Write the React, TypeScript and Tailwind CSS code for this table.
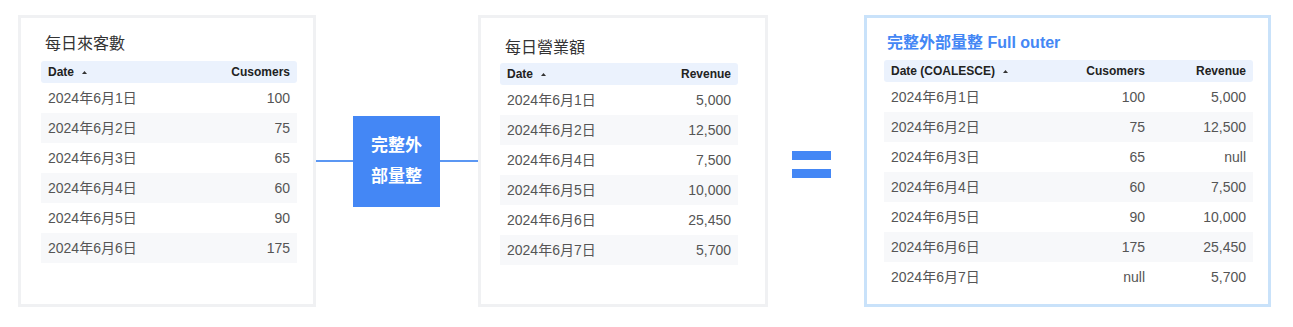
import React from 'react';

type Col = { label: string; width: number; align: 'left' | 'right'; sort?: boolean };

interface TableProps {
  cols: Col[];
  rows: string[][];
}

const Table: React.FC<TableProps> = ({ cols, rows }) => {
  return (
    <div className="flex w-fit flex-col">
      <div className="flex h-[22px] items-center rounded-[3px] bg-[#ebf2fd] text-[12px] font-bold text-[#222]">
        {cols.map((c) => (
          <div
            key={c.label}
            style={{ width: c.width }}
            className={`flex items-center px-[7px] ${c.align === 'right' ? 'justify-end' : 'justify-start'}`}
          >
            <span>{c.label}</span>
            {c.sort && (
              <svg width="5" height="3" viewBox="0 0 5 3" className="ml-[8px]">
                <polygon points="2.5,0 5,3 0,3" fill="#333" />
              </svg>
            )}
          </div>
        ))}
      </div>
      {rows.map((r, i) => (
        <div
          key={i}
          className={`flex h-[30px] items-center text-[14px] text-[#555] ${i % 2 === 1 ? 'bg-[#f7f8fa]' : ''}`}
        >
          {r.map((cell, j) => (
            <div
              key={j}
              style={{ width: cols[j].width }}
              className={`px-[7px] ${cols[j].align === 'right' ? 'text-right' : 'text-left'}`}
            >
              {cell}
            </div>
          ))}
        </div>
      ))}
    </div>
  );
};

const customers = [
  ['2024年6月1日', '100'],
  ['2024年6月2日', '75'],
  ['2024年6月3日', '65'],
  ['2024年6月4日', '60'],
  ['2024年6月5日', '90'],
  ['2024年6月6日', '175'],
];

const revenue = [
  ['2024年6月1日', '5,000'],
  ['2024年6月2日', '12,500'],
  ['2024年6月4日', '7,500'],
  ['2024年6月5日', '10,000'],
  ['2024年6月6日', '25,450'],
  ['2024年6月7日', '5,700'],
];

const joined = [
  ['2024年6月1日', '100', '5,000'],
  ['2024年6月2日', '75', '12,500'],
  ['2024年6月3日', '65', 'null'],
  ['2024年6月4日', '60', '7,500'],
  ['2024年6月5日', '90', '10,000'],
  ['2024年6月6日', '175', '25,450'],
  ['2024年6月7日', 'null', '5,700'],
];

export default function App() {
  return (
    <div
      className="flex h-[327px] w-[1293px] items-start bg-white pl-[18px] pt-[15px]"
      style={{ fontFamily: '"Liberation Sans", "Noto Sans CJK TC", sans-serif' }}
    >
      {/* left source table */}
      <div className="h-[292px] w-[298px] border-[3px] border-[#f0f1f3] pl-[20px] pt-[14px]">
        <div className="mb-[5px] pl-[4px] text-[16px] leading-6 text-[#333]">每日來客數</div>
        <Table
          cols={[
            { label: 'Date', width: 129, align: 'left', sort: true },
            { label: 'Cusomers', width: 127, align: 'right' },
          ]}
          rows={customers}
        />
      </div>

      {/* join node */}
      <div className="flex h-[292px] w-[162px] items-center">
        <div className="h-[2px] w-[37px] bg-[#5b97f3]" />
        <div className="flex h-[91px] w-[87px] flex-col items-center justify-center bg-[#4487f5] text-[17px] font-bold leading-[31px] text-white">
          <span>完整外</span>
          <span>部量整</span>
        </div>
        <div className="h-[2px] w-[38px] bg-[#5b97f3]" />
      </div>

      {/* right source table */}
      <div className="h-[292px] w-[290px] border-[3px] border-[#f0f1f3] pl-[19px] pt-[18px]">
        <div className="mb-[3px] pl-[5px] text-[16px] leading-6 text-[#333]">每日營業額</div>
        <Table
          cols={[
            { label: 'Date', width: 119, align: 'left', sort: true },
            { label: 'Revenue', width: 119, align: 'right' },
          ]}
          rows={revenue}
        />
      </div>

      {/* equals */}
      <div className="ml-[24px] mr-[33px] flex h-[292px] w-[39px] flex-col items-center justify-center gap-[9px] pt-[7px]">
        <div className="h-[9px] w-[39px] bg-[#4487f5]" />
        <div className="h-[9px] w-[39px] bg-[#4487f5]" />
      </div>

      {/* result */}
      <div className="h-[292px] w-[407px] border-[3px] border-[#c9e2fa] pl-[17px] pt-[13px]">
        <div className="mb-[5px] pl-[3px] text-[16px] font-bold leading-6 text-[#4487f5]">
          完整外部量整 Full outer
        </div>
        <Table
          cols={[
            { label: 'Date (COALESCE)', width: 160, align: 'left', sort: true },
            { label: 'Cusomers', width: 108, align: 'right' },
            { label: 'Revenue', width: 101, align: 'right' },
          ]}
          rows={joined}
        />
      </div>
    </div>
  );
}
